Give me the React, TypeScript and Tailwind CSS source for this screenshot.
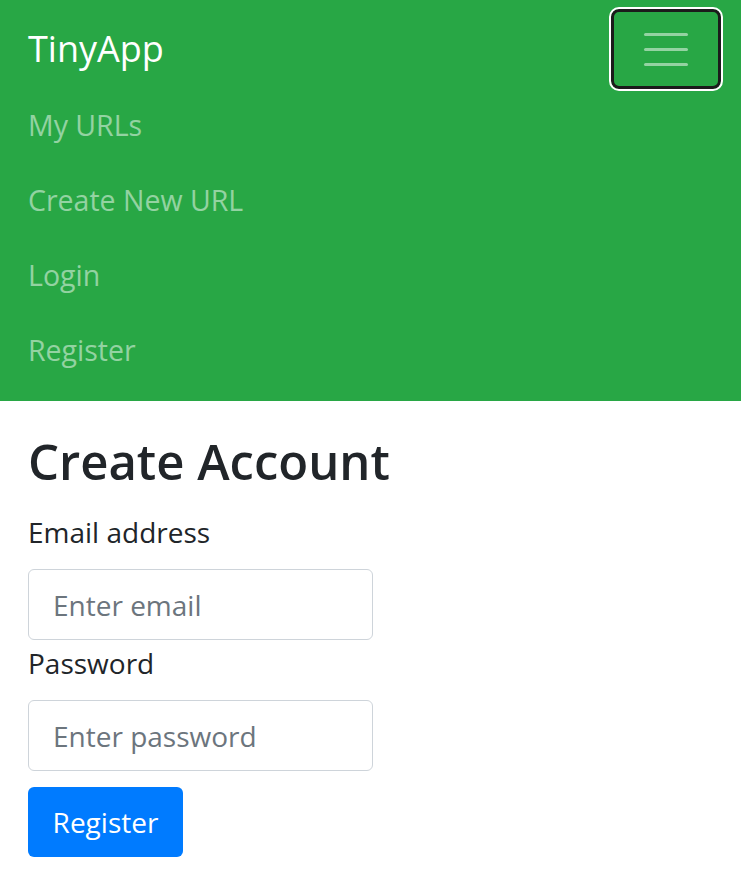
export default function App() {
  const links = ["My URLs", "Create New URL", "Login", "Register"];

  return (
    <div className="min-h-[895px] bg-white font-['Open_Sans',sans-serif] text-[#212529]">
      <nav className="h-[401px] bg-[#28a745] px-[28px]">
        <div className="flex h-[98px] items-center justify-between">
          <span className="text-[36px] leading-none text-white">TinyApp</span>
          <button className="flex h-[80px] w-[110px] flex-col items-center justify-center gap-[12px] rounded-[8px] border-[3px] border-[#1b1b1b] outline outline-2 outline-white -mr-[8px]">
            <span className="h-[3px] w-[44px] rounded bg-white/50" />
            <span className="h-[3px] w-[44px] rounded bg-white/50" />
            <span className="h-[3px] w-[44px] rounded bg-white/50" />
          </button>
        </div>
        <ul className="-mt-[10px] flex flex-col">
          {links.map((l) => (
            <li key={l} className="flex h-[75px] items-center text-[28.5px] text-white/50">
              {l}
            </li>
          ))}
        </ul>
      </nav>

      <main className="px-[28px]">
        <h1 className="mt-[36px] text-[49px] font-semibold leading-none">Create Account</h1>
        <form className="mt-[32px] flex flex-col">
          <label className="text-[28px] leading-none">Email address</label>
          <input
            type="email"
            placeholder="Enter email"
            className="mt-[23px] h-[71px] w-[345px] rounded-[6px] border border-[#ced4da] px-[24px] text-[28px] placeholder:text-[#6c757d]"
          />
          <label className="mt-[9px] text-[28px] leading-none">Password</label>
          <input
            type="password"
            placeholder="Enter password"
            className="mt-[23px] h-[71px] w-[345px] rounded-[6px] border border-[#ced4da] px-[24px] text-[28px] placeholder:text-[#6c757d]"
          />
          <button
            type="button"
            className="mt-[16px] h-[70px] w-[155px] rounded-[6px] bg-[#007bff] text-[28px] text-white"
          >
            Register
          </button>
        </form>
      </main>
    </div>
  );
}
